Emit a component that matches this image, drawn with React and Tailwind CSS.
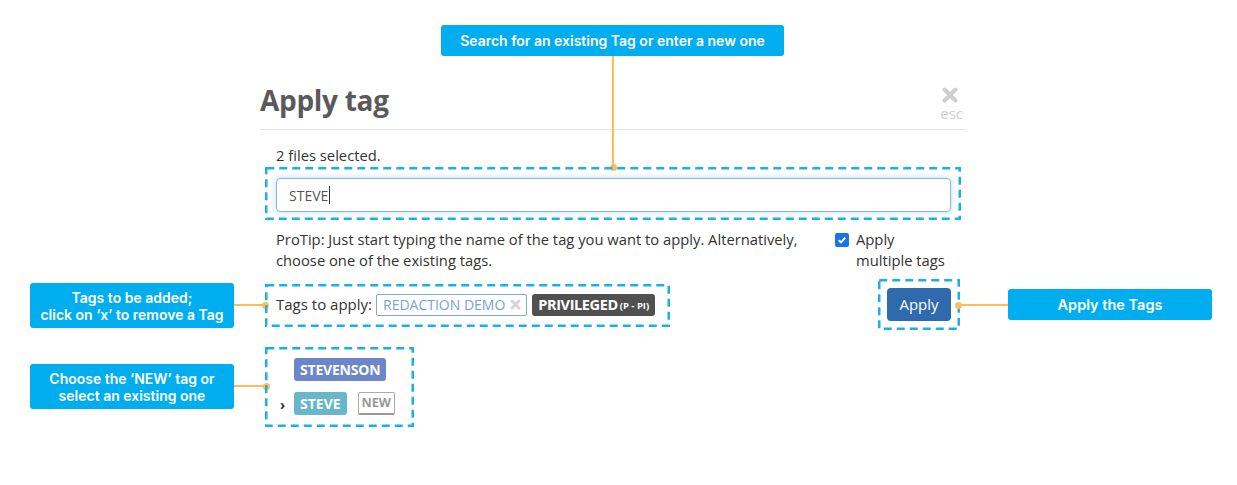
import React from "react";

const F = { fontFamily: '"Open Sans", "Noto Sans", sans-serif' };
const C = { fontFamily: 'Inter, "Noto Sans", sans-serif' };

function Dashed({ left, top, w, h }) {
  return (
    <svg
      className="absolute pointer-events-none"
      style={{ left, top }}
      width={w}
      height={h}
    >
      <rect
        x="1.25"
        y="1.25"
        width={w - 2.5}
        height={h - 2.5}
        fill="none"
        stroke="#1cb0ea"
        strokeWidth="2.5"
        strokeDasharray="8 5"
      />
    </svg>
  );
}

function Dot({ x, y }) {
  return (
    <div
      className="absolute w-[7px] h-[7px] rounded-full bg-[#fbbd5a]"
      style={{ left: x - 3.5, top: y - 3.5 }}
    />
  );
}

export default function App() {
  return (
    <div className="relative w-[1237px] h-[485px] bg-white overflow-hidden" style={F}>
      {/* Dialog */}
      <div className="ml-[260px] w-[706px] pt-[80px]">
        <div className="flex justify-between items-start border-b border-[#e5e5e5] pb-[8px]">
          <h1 className="text-[28px] leading-[40px] font-bold text-[#5a5a5a] tracking-[-0.3px]">Apply tag</h1>
          <div className="flex flex-col items-center mt-[7px] mr-[3px]">
            <svg width="16" height="16" viewBox="0 0 16 16" className="-ml-[4px]">
              <path d="M2.5 2.5 L13.5 13.5 M13.5 2.5 L2.5 13.5" stroke="#cfcfcf" strokeWidth="4" strokeLinecap="round" />
            </svg>
            <span className="text-[15px] leading-[16px] text-[#cfcfcf] mt-[2px]">esc</span>
          </div>
        </div>

        <div className="pl-[16px] pr-[15px] text-[#333] text-[14.75px]">
          <p className="mt-[15px] leading-[21px]">2 files selected.</p>

          <div className="mt-[12px] h-[34px] rounded-[4px] border border-[#8ab6e6] shadow-[0_0_6px_rgba(102,175,233,0.45)] flex items-center pl-[12px] text-[#555] text-[14px]">
            <span>STEVE</span>
            <span className="inline-block w-[1px] h-[18px] bg-[#333] ml-[1px]" />
          </div>

          <div className="flex justify-between mt-[17px]">
            <p className="w-[545px] leading-[21px]">
              ProTip: Just start typing the name of the tag you want to apply. Alternatively, choose one of the existing tags.
            </p>
            <div className="flex items-start w-[116px] mt-[4px]">
              <div className="w-[14px] h-[14px] rounded-[2px] bg-[#1a73e8] flex items-center justify-center shrink-0">
                <svg width="10" height="10" viewBox="0 0 10 10">
                  <path d="M1.8 5.2 L4 7.4 L8.3 2.6" stroke="white" strokeWidth="2" fill="none" />
                </svg>
              </div>
              <span className="ml-[7px] leading-[21px] -mt-[4px] whitespace-nowrap">
                Apply
                <br />
                multiple tags
              </span>
            </div>
          </div>

          <div className="flex justify-between items-center mt-[17px] h-[33px]">
            <div className="flex items-center">
              <span className="text-[15px] mr-[4px]">Tags to apply:</span>
              <span className="h-[22px] flex items-center border border-[#7fa9dd] rounded-[2px] pl-[6px] pr-[5px] text-[#78a1d8] text-[14px]">
                REDACTION DEMO
                <svg width="11" height="11" viewBox="0 0 11 11" className="ml-[5px]">
                  <path d="M2 2 L9 9 M9 2 L2 9" stroke="#d6d6d6" strokeWidth="3" strokeLinecap="round" />
                </svg>
              </span>
              <span className="ml-[5px] h-[22px] flex items-center bg-[#505050] rounded-[3px] px-[6px] text-white font-bold text-[14.5px] tracking-[-0.4px]">
                PRIVILEGED
                <span className="text-[9.5px] ml-[2px] mt-[3px] tracking-normal">(P - PI)</span>
              </span>
            </div>
            <button className="w-[64px] h-[33px] rounded-[4px] bg-[#2f6aad] text-white text-[15px]">Apply</button>
          </div>

          <div className="mt-[37px] flex flex-col gap-[11px] pl-[18px]">
            <div className="flex">
              <span className="h-[23px] px-[6px] flex items-center rounded-[3px] bg-[#6c86c9] text-white font-bold text-[14px] tracking-[-0.2px]">STEVENSON</span>
            </div>
            <div className="flex items-center relative">
              <span className="absolute -left-[14px] top-[2px] text-[14px] text-[#333] font-bold">›</span>
              <span className="h-[23px] px-[6px] flex items-center rounded-[3px] bg-[#68b6c9] text-white font-bold text-[14px]">STEVE</span>
              <span className="ml-[11px] h-[23px] px-[3px] flex items-center border border-[#aaa] border-b-2 border-b-[#999] rounded-[2px] text-[#999] font-bold text-[12.5px]">NEW</span>
            </div>
          </div>
        </div>
      </div>

      {/* Annotations */}
      <div className="absolute left-[441px] top-[25px] w-[343px] h-[31px] rounded-[3px] bg-[#00aeef] text-white font-semibold text-[14px] flex items-center justify-center" style={C}>
        Search for an existing Tag or enter a new one
      </div>
      <div className="absolute left-[612px] top-[56px] w-[2px] h-[111px] bg-[#fbbd5a]" />
      <Dot x={613} y={167} />
      <Dashed left={265} top={167} w={696} h={53} />

      <div className="absolute left-[30px] top-[283px] w-[204px] h-[45px] rounded-[3px] bg-[#00aeef] text-white font-semibold text-[14px] leading-[17px] flex flex-col items-center justify-center text-center" style={C}>
        <span>Tags to be added;</span>
        <span>click on ‘x’ to remove a Tag</span>
      </div>
      <div className="absolute left-[234px] top-[304px] w-[31px] h-[2px] bg-[#fbbd5a]" />
      <Dot x={265} y={305} />
      <Dashed left={265} top={284} w={405} h={43} />

      <Dashed left={878} top={279} w={82} h={51} />
      <div className="absolute left-[959px] top-[304px] w-[49px] h-[2px] bg-[#fbbd5a]" />
      <Dot x={958} y={305} />
      <div className="absolute left-[1008px] top-[289px] w-[204px] h-[31px] rounded-[3px] bg-[#00aeef] text-white font-semibold text-[14.5px] flex items-center justify-center" style={C}>
        Apply the Tags
      </div>

      <div className="absolute left-[30px] top-[364px] w-[204px] h-[45px] rounded-[3px] bg-[#00aeef] text-white font-semibold text-[14px] leading-[17px] flex flex-col items-center justify-center text-center" style={C}>
        <span>Choose the ‘NEW’ tag or</span>
        <span>select an existing one</span>
      </div>
      <div className="absolute left-[234px] top-[385px] w-[31px] h-[2px] bg-[#fbbd5a]" />
      <Dot x={266} y={386} />
      <Dashed left={265} top={347} w={149} h={80} />
    </div>
  );
}
